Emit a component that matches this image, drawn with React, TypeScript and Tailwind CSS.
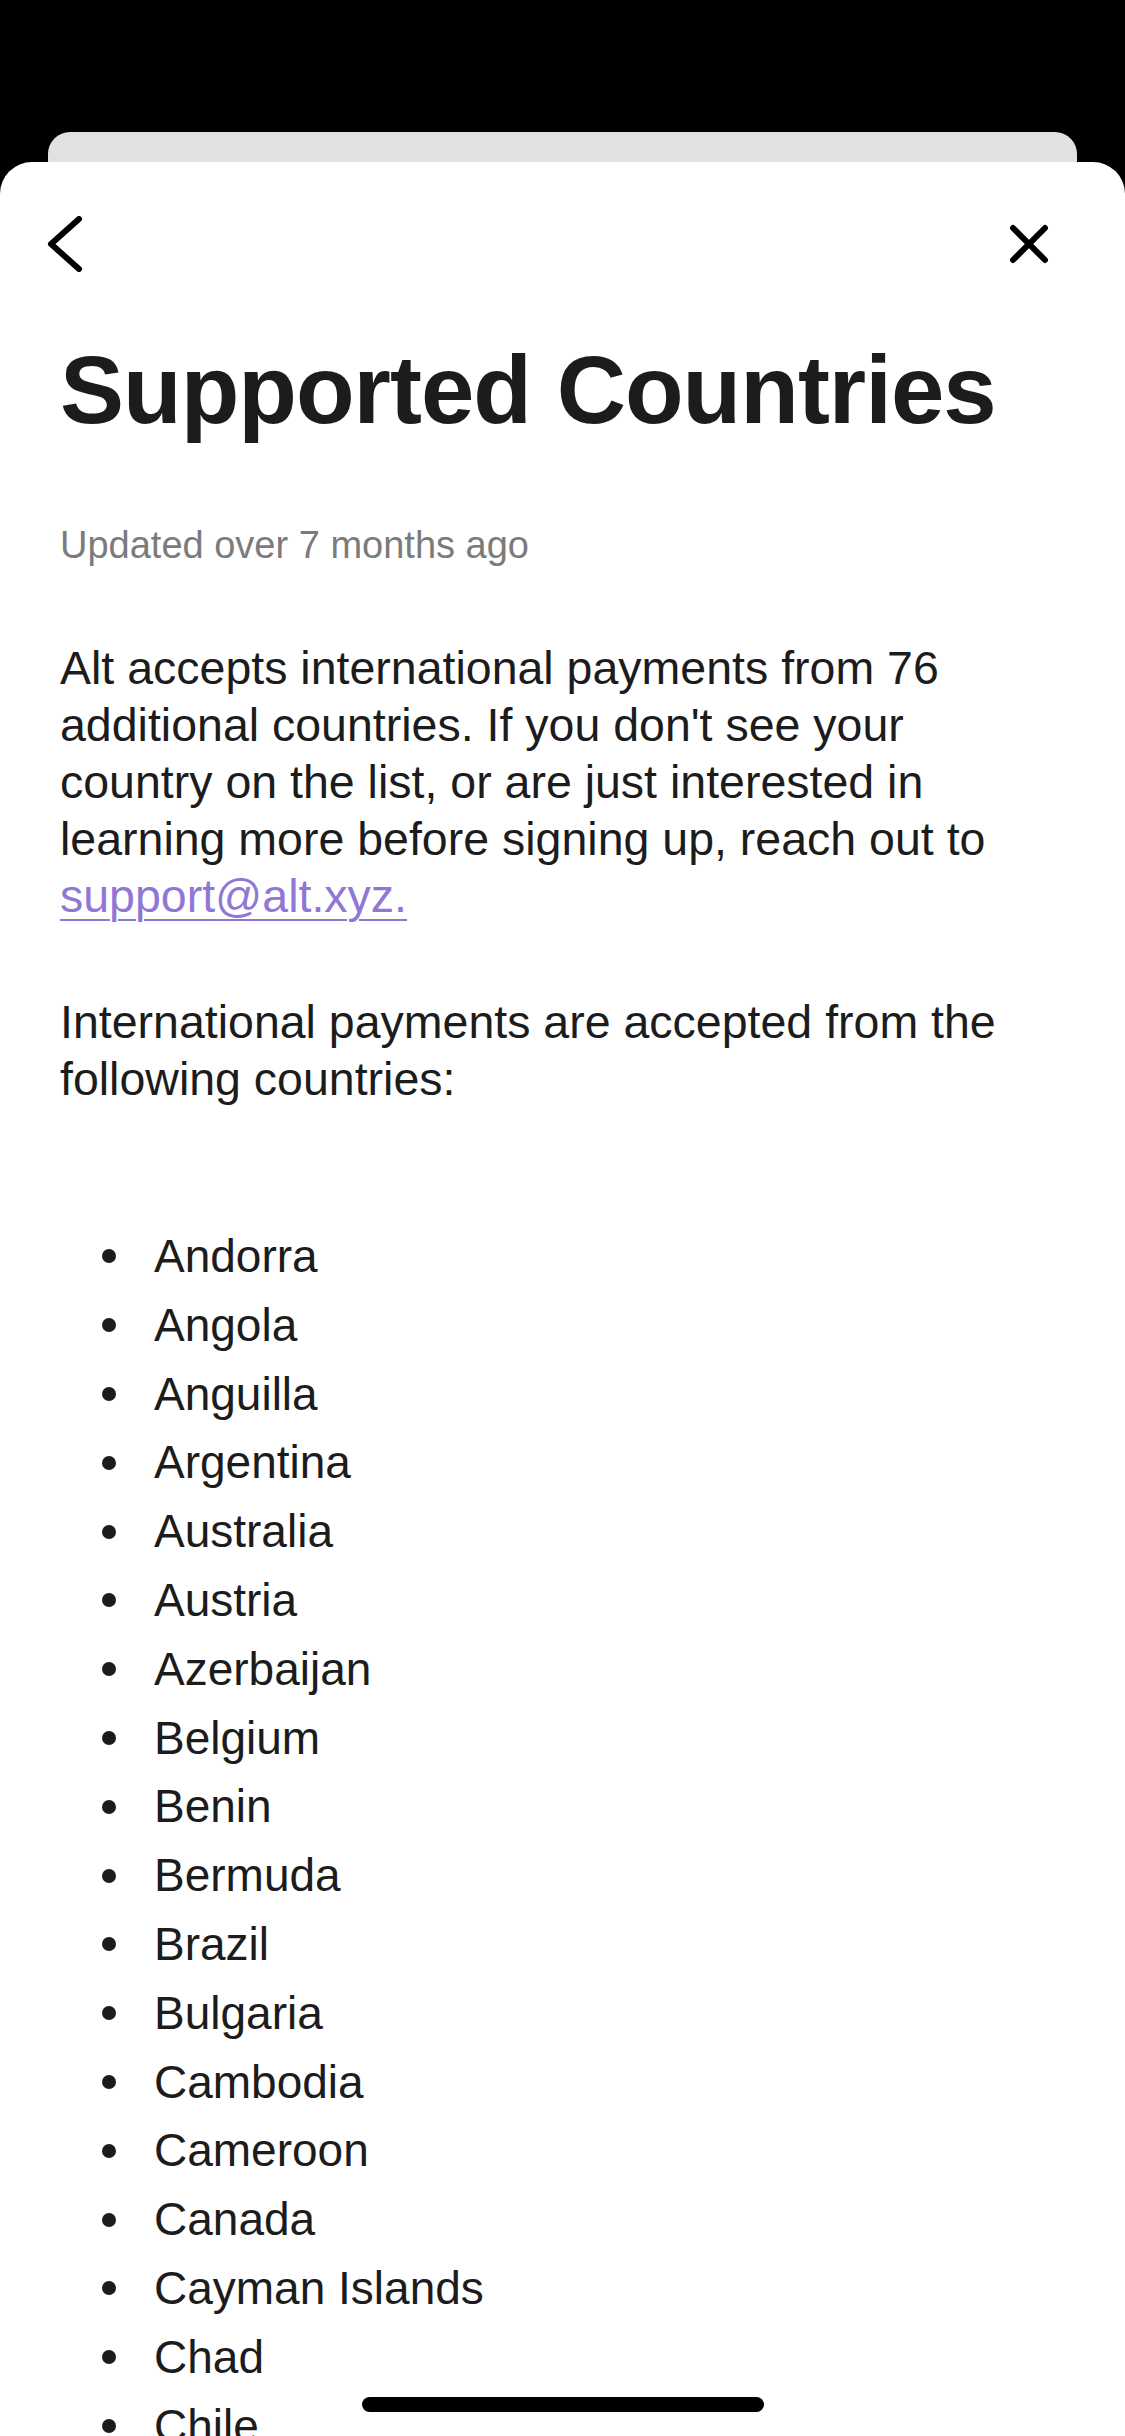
import React from 'react';

const countries = [
  'Andorra',
  'Angola',
  'Anguilla',
  'Argentina',
  'Australia',
  'Austria',
  'Azerbaijan',
  'Belgium',
  'Benin',
  'Bermuda',
  'Brazil',
  'Bulgaria',
  'Cambodia',
  'Cameroon',
  'Canada',
  'Cayman Islands',
  'Chad',
  'Chile',
  'Colombia',
  'Costa Rica',
];

const App: React.FC = () => {
  return (
    <div className="relative h-[2436px] w-[1125px] overflow-hidden bg-black font-['Liberation_Sans',Arial,sans-serif]">
      {/* sheet stack */}
      <div className="pt-[132px]">
        <div className="mx-[48px] h-[30px] rounded-t-[22px] bg-[#e1e1e1]" />
        <div className="min-h-[2300px] rounded-t-[32px] bg-white">
          <div className="flex items-center justify-between pl-[41px] pr-[72px] pt-[58px]">
            <button className="flex h-[48px] w-[48px] items-center justify-center">
              <svg width="48" height="56" viewBox="0 0 48 56" fill="none">
                <path d="M38 3 L10 28 L38 53" stroke="#000" strokeWidth="6" strokeLinecap="round" strokeLinejoin="round" />
              </svg>
            </button>
            <button className="flex h-[48px] w-[48px] items-center justify-center">
              <svg width="40" height="40" viewBox="0 0 40 40" fill="none">
                <path d="M4 4 L36 36 M36 4 L4 36" stroke="#000" strokeWidth="6" strokeLinecap="round" />
              </svg>
            </button>
          </div>

          <div className="px-[60px]">
            <h1 className="mt-[67px] text-[96px] font-bold leading-[110px] tracking-[-1px] text-[#1c1c1c]">
              Supported Countries
            </h1>
            <p className="mt-[77px] text-[38px] leading-[46px] text-[#7b7b7b]">Updated over 7 months ago</p>

            <div className="max-w-[950px] text-[46.5px] leading-[57px] text-[#1c1c1c]">
              <p className="mt-[72px]">
                Alt accepts international payments from 76 additional countries. If you don't see your country on
                the list, or are just interested in learning more before signing up, reach out to{' '}
                <a href="#" className="text-[#9077d6] underline decoration-[2px] underline-offset-[7px]">
                  support@alt.xyz.
                </a>
              </p>
              <p className="mt-[69px]">International payments are accepted from the following countries:</p>
            </div>

            <ul className="mt-[114px] text-[46px] text-[#1c1c1c]">
              {countries.map((c) => (
                <li key={c} className="flex items-center leading-[68.8px]">
                  <span className="ml-[42px] mr-[38px] h-[14px] w-[14px] shrink-0 rounded-full bg-[#1c1c1c]" />
                  <span>{c}</span>
                </li>
              ))}
            </ul>
          </div>
        </div>
      </div>

      {/* home indicator */}
      <div className="absolute left-[362px] top-[2397px] h-[15px] w-[402px] rounded-full bg-black" />
    </div>
  );
};

export default App;
